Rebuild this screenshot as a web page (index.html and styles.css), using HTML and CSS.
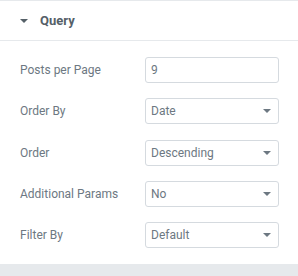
FILE: index.html
```html
<!DOCTYPE html>
<html lang="en">
<head>
    <meta charset="UTF-8">
    <meta name="viewport" content="width=device-width, initial-scale=1.0">
    <title>Query</title>
    <link rel="stylesheet" href="styles.css">
</head>
<body>
    <div class="panel">
        <div class="section-head">
            <span class="caret"></span>
            <span class="section-title">Query</span>
        </div>
        <div class="controls">
            <div class="control">
                <label>Posts per Page</label>
                <div class="field">9</div>
            </div>
            <div class="control">
                <label>Order By</label>
                <div class="field select">Date</div>
            </div>
            <div class="control">
                <label>Order</label>
                <div class="field select">Descending</div>
            </div>
            <div class="control">
                <label>Additional Params</label>
                <div class="field select">No</div>
            </div>
            <div class="control">
                <label>Filter By</label>
                <div class="field select">Default</div>
            </div>
        </div>
        <div class="footer"></div>
    </div>
</body>
</html>
```

FILE: styles.css
```css
body {
    margin: 0;
    font-family: Roboto, Arial, sans-serif;
    background-color: #fff;
}
.panel {
    width: 298px;
    height: 276px;
    display: flex;
    flex-direction: column;
    border-top: 1px solid #e6e9ec;
    box-sizing: border-box;
}
.section-head {
    height: 39px;
    display: flex;
    align-items: center;
    padding-left: 20px;
    border-bottom: 1px solid #e6e9ec;
}
.caret {
    width: 0;
    height: 0;
    border-left: 4px solid transparent;
    border-right: 4px solid transparent;
    border-top: 4px solid #556068;
    margin-right: 12px;
}
.section-title {
    font-size: 13px;
    font-weight: bold;
    color: #556068;
}
.controls {
    padding: 16px 19px 0 20px;
    display: flex;
    flex-direction: column;
    gap: 15.25px;
    flex: 1;
}
.control {
    display: flex;
    align-items: center;
    height: 26px;
}
.control label {
    width: 125px;
    font-size: 12px;
    color: #6d7882;
}
.field {
    position: relative;
    width: 134px;
    height: 26px;
    box-sizing: border-box;
    border: 1px solid #d5dadf;
    border-radius: 3px;
    padding: 0 5px;
    font-size: 12px;
    line-height: 24px;
    color: #6d7882;
}
.select::after {
    content: "";
    position: absolute;
    right: 7px;
    top: 10px;
    border-left: 4px solid transparent;
    border-right: 4px solid transparent;
    border-top: 4px solid #6d7882;
}
.footer {
    height: 12px;
    background: #e6e9ec;
}
```
